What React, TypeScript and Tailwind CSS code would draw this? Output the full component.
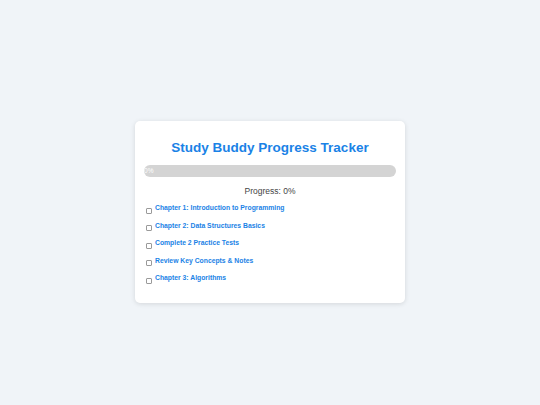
import React, { useState } from 'react';

interface Task {
  id: number;
  label: string;
}

const tasks: Task[] = [
  { id: 1, label: 'Chapter 1: Introduction to Programming' },
  { id: 2, label: 'Chapter 2: Data Structures Basics' },
  { id: 3, label: 'Complete 2 Practice Tests' },
  { id: 4, label: 'Review Key Concepts & Notes' },
  { id: 5, label: 'Chapter 3: Algorithms' },
];

export default function App() {
  const [done, setDone] = useState<Record<number, boolean>>({});

  const completed = tasks.filter(t => done[t.id]).length;
  const percent = Math.round((completed / tasks.length) * 100);

  return (
    <div className="min-h-screen w-full bg-[#f0f4f8] flex items-center justify-center pt-[18px] font-['Liberation_Sans',Arial,sans-serif]">
      <div className="w-[270px] bg-white rounded-[5px] shadow-[0_1px_5px_rgba(0,0,0,0.12)] px-[9px] pt-[18px] pb-[18px]">
        <h1 className="text-center text-[#1a82e6] font-bold text-[13.5px] leading-[18px]">
          Study Buddy Progress Tracker
        </h1>

        <div className="mt-[8px] h-[12px] w-full rounded-full bg-[#d4d4d4] overflow-hidden">
          <div
            className="h-full bg-[#1a82e6] text-white text-[6.5px] leading-[12px] whitespace-nowrap"
            style={{ width: `${percent}%` }}
          >
            {percent}%
          </div>
        </div>

        <p className="mt-[8px] text-center text-[8.5px] leading-[12px] text-[#444]">
          Progress: {percent}%
        </p>

        <ul className="mt-[6px] flex flex-col gap-[5.5px] pl-[2px]">
          {tasks.map(task => (
            <li key={task.id} className="flex items-center gap-[3px] h-[12px]">
              <input
                type="checkbox"
                checked={!!done[task.id]}
                onChange={() => setDone(prev => ({ ...prev, [task.id]: !prev[task.id] }))}
                className="w-[6px] h-[6px] mt-[4px] appearance-none border border-[#9a9a9a] rounded-[1px] bg-white checked:bg-[#1a82e6]"
              />
              <label className="text-[6.8px] font-bold text-[#1a82e6] leading-[10px] -mt-[1px]">
                {task.label}
              </label>
            </li>
          ))}
        </ul>
      </div>
    </div>
  );
}
